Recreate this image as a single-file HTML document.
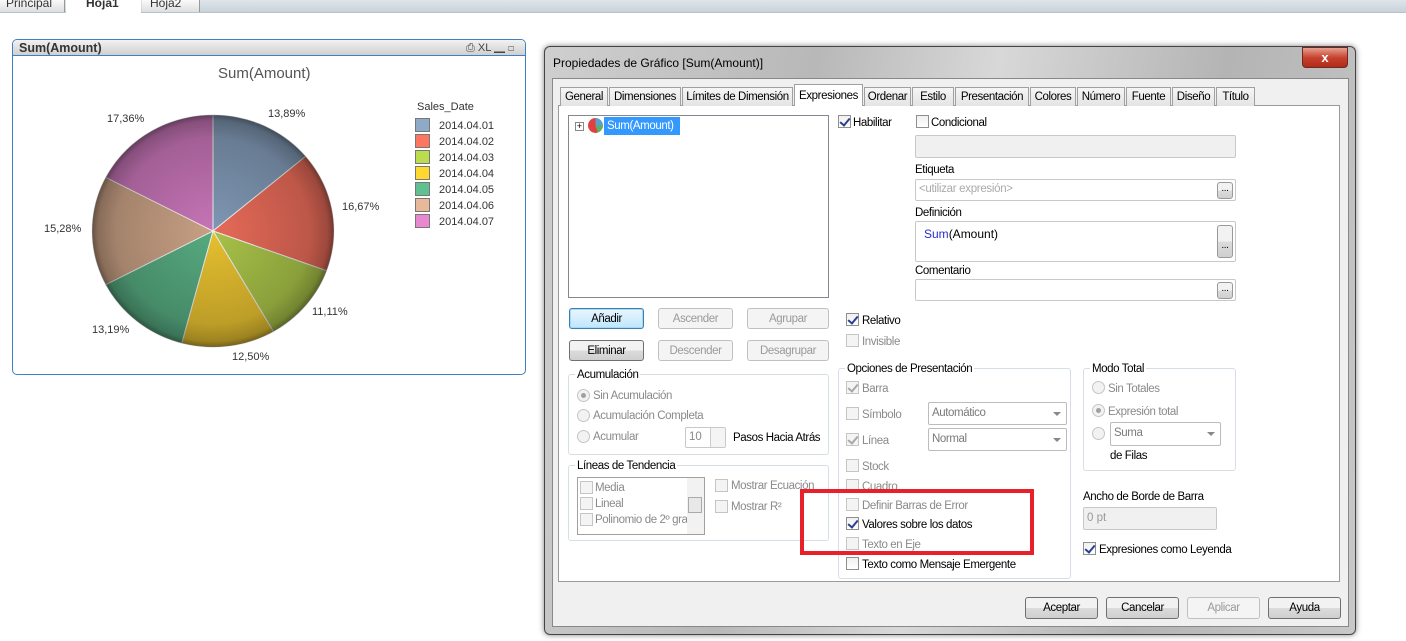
<!DOCTYPE html>
<html><head><meta charset="utf-8"><style>
*{margin:0;padding:0;box-sizing:border-box}
body{width:1406px;height:641px;background:#fff;font-family:"Liberation Sans",sans-serif;font-size:12px;color:#000;position:relative;overflow:hidden}
.a{position:absolute;white-space:nowrap}
.t{font-size:11.5px;letter-spacing:-0.4px;margin-top:2px}
.g{color:#8a8a8a}
.cb{position:absolute;width:13px;height:13px;border:1px solid #8f8f8f;background:linear-gradient(#f0f0f0,#fff)}
.cb.d{border-color:#c5c5c5;background:#f4f4f4}
.ck::after{content:"";position:absolute;left:3px;top:0px;width:4px;height:8px;border:solid #2a3f8f;border-width:0 2px 2px 0;transform:rotate(40deg)}
.cb.d.ck::after{border-color:#a8a8a8}
.rd{position:absolute;width:13px;height:13px;border-radius:50%;border:1px solid #c5c5c5;background:#f2f2f2}
.rd.on::after{content:"";position:absolute;left:3px;top:3px;width:5px;height:5px;border-radius:50%;background:#a0a0a0}
.btn{position:absolute;border:1px solid #707070;border-radius:3px;background:linear-gradient(#f2f2f2 50%,#dcdcdc 50%,#cfcfcf);text-align:center;line-height:20px;font-size:11.5px;letter-spacing:-0.4px}
.btn.d{border-color:#c0c0c0;background:#f4f4f4;color:#9a9a9a}
.in{position:absolute;border:1px solid #c8c8c8;border-radius:2px;background:#fff}
.gb{position:absolute;border:1px solid #d5dfe5;border-radius:3px}
.gl{position:absolute;background:#fff;padding:0 2px;font-size:11.5px;letter-spacing:-0.4px;top:-6px;left:6px}
.dd{position:absolute;border:1px solid #bcbcbc;border-radius:2px;background:#fff;color:#7a7a7a;padding-left:3px;line-height:20px;font-size:11.5px;letter-spacing:-0.4px}
.dd::after{content:"";position:absolute;right:5px;top:9px;border:4px solid transparent;border-top:4px solid #888}
.tab{position:absolute;top:87px;height:19px;border:1px solid #a0a0a0;border-bottom:none;background:linear-gradient(#f6f6f6,#e4e4e4);line-height:19px;text-align:center;font-size:11.5px;letter-spacing:-0.4px}
</style></head><body>
<div class="a" style="left:0;top:0;width:1406px;height:13px;background:linear-gradient(#dfe5ea,#c9d2da);border-bottom:1px solid #b8c2cc"></div>
<div class="a" style="left:0;top:0;width:65px;height:12px;background:linear-gradient(#fafafa,#dedede);border-right:1px solid #999;font-size:12px;line-height:6px;padding-left:6px;color:#333">Principal</div>
<div class="a" style="left:66px;top:0;width:75px;height:14px;background:#fff;font-weight:bold;font-size:12px;line-height:6px;padding-left:20px;color:#333">Hoja1</div>
<div class="a" style="left:142px;top:0;width:58px;height:12px;background:linear-gradient(#fafafa,#dedede);border-right:1px solid #999;font-size:12px;line-height:6px;padding-left:8px;color:#333">Hoja2</div>

<div class="a" style="left:12px;top:39px;width:514px;height:336px;border:1px solid #3f7fc2;border-radius:5px;background:#fff"></div>
<div class="a" style="left:13px;top:40px;width:512px;height:16px;background:linear-gradient(#f2f2f2,#cfcfcf);border-radius:4px 4px 0 0;border-bottom:1px solid #3f7fc2;font-weight:bold;font-size:12.5px;padding-left:6px;line-height:16px;color:#333">Sum(Amount)</div>
<div class="a" style="left:466px;top:40px;font-size:11px;color:#444;line-height:16px">⎙ XL ▁ ◻</div>
<div class="a" style="left:218px;top:65px;font-size:15px;color:#555">Sum(Amount)</div>
<svg class="a" style="left:0;top:0" width="540" height="380">
<defs><radialGradient id="sh" cx="213" cy="231" r="121" gradientUnits="userSpaceOnUse"><stop offset="0" stop-color="#000" stop-opacity="0"/><stop offset="0.8" stop-color="#000" stop-opacity="0.18"/><stop offset="0.95" stop-color="#000" stop-opacity="0.32"/><stop offset="1" stop-color="#000" stop-opacity="0.5"/></radialGradient></defs>
<g transform="translate(213,231) scale(1,0.96) translate(-213,-231)" stroke="#eee" stroke-width="1">
<path d="M213,231 L213,110 A121,121 0 0 1 305.7,153.2 Z" fill="#7f97b3"/>
<path d="M213,231 L305.7,153.2 A121,121 0 0 1 326.7,272.4 Z" fill="#e66a58"/>
<path d="M213,231 L326.7,272.4 A121,121 0 0 1 273.5,335.8 Z" fill="#a8c248"/>
<path d="M213,231 L273.5,335.8 A121,121 0 0 1 181.7,347.9 Z" fill="#e6c030"/>
<path d="M213,231 L181.7,347.9 A121,121 0 0 1 105.7,286.9 Z" fill="#56aa80"/>
<path d="M213,231 L105.7,286.9 A121,121 0 0 1 105.7,175.1 Z" fill="#c8a084"/>
<path d="M213,231 L105.7,175.1 A121,121 0 0 1 213,110 Z" fill="#c674b6"/>
<ellipse cx="213" cy="231" rx="121" ry="121" fill="url(#sh)" stroke="none"/>
</g>
</svg>
<div class="a" style="left:268px;top:108px;font-size:11px;color:#333">13,89%</div>
<div class="a" style="left:342px;top:201px;font-size:11px;color:#333">16,67%</div>
<div class="a" style="left:312px;top:306px;font-size:11px;color:#333">11,11%</div>
<div class="a" style="left:232px;top:351px;font-size:11px;color:#333">12,50%</div>
<div class="a" style="left:92px;top:324px;font-size:11px;color:#333">13,19%</div>
<div class="a" style="left:44px;top:223px;font-size:11px;color:#333">15,28%</div>
<div class="a" style="left:107px;top:113px;font-size:11px;color:#333">17,36%</div>
<div class="a" style="left:417px;top:101px;font-size:11px;color:#333">Sales_Date</div>
<div class="a" style="left:415px;top:118px;font-size:11px;color:#333;line-height:15px">
<div><span style="display:inline-block;width:15px;height:14px;background:#8fa9c8;border:1px solid #777;vertical-align:-3px;margin-right:9px"></span>2014.04.01</div>
<div><span style="display:inline-block;width:15px;height:14px;background:#ff7660;border:1px solid #777;vertical-align:-3px;margin-right:9px"></span>2014.04.02</div>
<div><span style="display:inline-block;width:15px;height:14px;background:#bcdc50;border:1px solid #777;vertical-align:-3px;margin-right:9px"></span>2014.04.03</div>
<div><span style="display:inline-block;width:15px;height:14px;background:#ffd830;border:1px solid #777;vertical-align:-3px;margin-right:9px"></span>2014.04.04</div>
<div><span style="display:inline-block;width:15px;height:14px;background:#60c090;border:1px solid #777;vertical-align:-3px;margin-right:9px"></span>2014.04.05</div>
<div><span style="display:inline-block;width:15px;height:14px;background:#e8b898;border:1px solid #777;vertical-align:-3px;margin-right:9px"></span>2014.04.06</div>
<div><span style="display:inline-block;width:15px;height:14px;background:#e888d0;border:1px solid #777;vertical-align:-3px;margin-right:9px"></span>2014.04.07</div>
</div>

<div class="a" style="left:544px;top:46px;width:812px;height:589px;border:1px solid #444;border-radius:6px;background:linear-gradient(100deg,#cfcfcf,#b8b8b8 30%,#d8d8d8 50%,#b4b4b4 75%,#c8c8c8);box-shadow:0 0 6px rgba(0,0,0,.5)"></div>
<div class="a" style="left:553px;top:55px;font-size:12px;line-height:16px">Propiedades de Gráfico [Sum(Amount)]</div>
<div class="a" style="left:1302px;top:47px;width:46px;height:21px;border:1px solid #6b2a22;border-radius:0 0 4px 4px;background:linear-gradient(#e8a090,#c8432f 50%,#b02c18);color:#fff;font-weight:bold;text-align:center;line-height:19px;font-size:13px">x</div>
<div class="a" style="left:552px;top:78px;width:797px;height:549px;border:1px solid #888;background:#f0f0f0"></div>
<div class="a" style="left:558px;top:105px;width:782px;height:477px;border:1px solid #9a9a9a;background:#fff"></div>
<div class="tab" style="left:560px;width:48px">General</div>
<div class="tab" style="left:609px;width:72px">Dimensiones</div>
<div class="tab" style="left:682px;width:111px">Límites de Dimensión</div>
<div class="tab" style="left:794px;top:84px;height:22px;width:69px;background:#fff;line-height:22px">Expresiones</div>
<div class="tab" style="left:864px;width:47px">Ordenar</div>
<div class="tab" style="left:912px;width:42px">Estilo</div>
<div class="tab" style="left:955px;width:74px">Presentación</div>
<div class="tab" style="left:1030px;width:46px">Colores</div>
<div class="tab" style="left:1077px;width:48px">Número</div>
<div class="tab" style="left:1126px;width:45px">Fuente</div>
<div class="tab" style="left:1172px;width:43px">Diseño</div>
<div class="tab" style="left:1216px;width:39px">Título</div>

<div class="a" style="left:568px;top:115px;width:261px;height:183px;border:1px solid #828790;background:#fff"></div>
<div class="a" style="left:575px;top:122px;width:9px;height:9px;border:1px solid #888;font-size:9px;line-height:7px;text-align:center">+</div>
<div class="a" style="left:588px;top:118px;width:15px;height:15px;border-radius:50%;background:conic-gradient(#5aa0d0 0 25%,#60b060 25% 45%,#e04040 45%)"></div>
<div class="a" style="left:604px;top:117px;width:76px;height:18px;background:#3399ff;color:#fff;line-height:18px;padding-left:3px;font-size:11.5px;letter-spacing:-0.4px">Sum(Amount)</div>

<div class="btn" style="left:569px;top:308px;width:75px;height:21px;border-color:#3c7fb1;background:linear-gradient(#eaf6fd,#bee6fd);box-shadow:inset 0 0 0 1px #a8d8f8">Añadir</div>
<div class="btn d" style="left:658px;top:308px;width:75px;height:21px">Ascender</div>
<div class="btn d" style="left:747px;top:308px;width:82px;height:21px">Agrupar</div>
<div class="btn" style="left:569px;top:340px;width:75px;height:21px">Eliminar</div>
<div class="btn d" style="left:658px;top:340px;width:75px;height:21px">Descender</div>
<div class="btn d" style="left:747px;top:340px;width:82px;height:21px">Desagrupar</div>

<div class="gb" style="left:568px;top:374px;width:261px;height:81px"><span class="gl">Acumulación</span></div>
<div class="rd on" style="left:577px;top:389px"></div><div class="a t g" style="left:593px;top:388px">Sin Acumulación</div>
<div class="rd" style="left:577px;top:409px"></div><div class="a t g" style="left:593px;top:408px">Acumulación Completa</div>
<div class="rd" style="left:577px;top:430px"></div><div class="a t g" style="left:593px;top:429px">Acumular</div>
<div class="in" style="left:685px;top:427px;width:41px;height:21px;color:#888;padding-left:3px;line-height:19px;font-size:11.5px">10</div>
<div class="a" style="left:710px;top:428px;width:15px;height:19px;border-left:1px solid #ccc;background:#f4f4f4"></div>
<div class="a t" style="left:733px;top:430px">Pasos Hacia Atrás</div>

<div class="gb" style="left:568px;top:465px;width:261px;height:76px"><span class="gl">Líneas de Tendencia</span></div>
<div class="a" style="left:577px;top:477px;width:128px;height:58px;border:1px solid #a0a0a0;background:#fff;overflow:hidden"></div>
<div class="cb d" style="left:580px;top:481px"></div><div class="a t g" style="left:595px;top:480px">Media</div>
<div class="cb d" style="left:580px;top:497px"></div><div class="a t g" style="left:595px;top:496px">Lineal</div>
<div class="cb d" style="left:580px;top:513px"></div><div class="a t g" style="left:595px;top:512px">Polinomio de 2º gra</div>
<div class="a" style="left:687px;top:478px;width:17px;height:56px;background:#f2f2f2"></div>
<div class="a" style="left:688px;top:497px;width:14px;height:16px;border:1px solid #aaa;background:#e8e8e8"></div>
<div class="cb d" style="left:715px;top:479px"></div><div class="a t g" style="left:731px;top:478px">Mostrar Ecuación</div>
<div class="cb d" style="left:715px;top:500px"></div><div class="a t g" style="left:731px;top:499px">Mostrar R²</div>

<div class="cb ck" style="left:838px;top:115px"></div><div class="a t" style="left:853px;top:115px">Habilitar</div>
<div class="cb" style="left:916px;top:115px"></div><div class="a t" style="left:931px;top:115px">Condicional</div>
<div class="in" style="left:915px;top:135px;width:321px;height:23px;background:#f0f0f0"></div>
<div class="a t" style="left:915px;top:162px">Etiqueta</div>
<div class="in" style="left:915px;top:179px;width:321px;height:22px;color:#aaa;padding-left:3px;line-height:19px;font-size:11.5px;letter-spacing:-0.3px">&lt;utilizar expresión&gt;</div>
<div class="btn" style="left:1217px;top:182px;width:16px;height:17px;line-height:12px;font-size:10px;border-color:#999">...</div>
<div class="a t" style="left:915px;top:205px">Definición</div>
<div class="in" style="left:915px;top:221px;width:321px;height:41px;padding:5px 0 0 8px;font-size:12px"><span style="color:#2a2ad0">Sum</span>(Amount)</div>
<div class="btn" style="left:1217px;top:225px;width:16px;height:33px;line-height:40px;font-size:10px;border-color:#999">...</div>
<div class="a t" style="left:915px;top:263px">Comentario</div>
<div class="in" style="left:915px;top:279px;width:321px;height:22px"></div>
<div class="btn" style="left:1217px;top:282px;width:16px;height:17px;line-height:12px;font-size:10px;border-color:#999">...</div>

<div class="cb ck" style="left:846px;top:313px"></div><div class="a t" style="left:862px;top:313px">Relativo</div>
<div class="cb d" style="left:846px;top:334px"></div><div class="a t g" style="left:862px;top:334px">Invisible</div>

<div class="gb" style="left:838px;top:368px;width:233px;height:211px"><span class="gl">Opciones de Presentación</span></div>
<div class="cb d ck" style="left:846px;top:381px"></div><div class="a t g" style="left:862px;top:381px">Barra</div>
<div class="cb d" style="left:846px;top:407px"></div><div class="a t g" style="left:862px;top:407px">Símbolo</div>
<div class="dd" style="left:928px;top:402px;width:139px;height:23px">Automático</div>
<div class="cb d ck" style="left:846px;top:433px"></div><div class="a t g" style="left:862px;top:433px">Línea</div>
<div class="dd" style="left:928px;top:428px;width:139px;height:23px">Normal</div>
<div class="cb d" style="left:846px;top:459px"></div><div class="a t g" style="left:862px;top:459px">Stock</div>
<div class="cb d" style="left:846px;top:479px"></div><div class="a t g" style="left:862px;top:479px">Cuadro</div>
<div class="cb d" style="left:846px;top:498px"></div><div class="a t g" style="left:862px;top:498px">Definir Barras de Error</div>
<div class="cb ck" style="left:846px;top:517px"></div><div class="a t" style="left:862px;top:517px">Valores sobre los datos</div>
<div class="cb d" style="left:846px;top:537px"></div><div class="a t g" style="left:862px;top:537px">Texto en Eje</div>
<div class="cb" style="left:846px;top:557px"></div><div class="a t" style="left:862px;top:557px">Texto como Mensaje Emergente</div>

<div class="gb" style="left:1083px;top:368px;width:153px;height:103px"><span class="gl">Modo Total</span></div>
<div class="rd" style="left:1092px;top:381px"></div><div class="a t g" style="left:1108px;top:381px">Sin Totales</div>
<div class="rd on" style="left:1092px;top:404px"></div><div class="a t g" style="left:1108px;top:404px">Expresión total</div>
<div class="rd" style="left:1092px;top:427px"></div>
<div class="dd" style="left:1110px;top:422px;width:111px;height:24px">Suma</div>
<div class="a t" style="left:1110px;top:448px">de Filas</div>

<div class="a t" style="left:1083px;top:489px">Ancho de Borde de Barra</div>
<div class="in" style="left:1083px;top:507px;width:134px;height:23px;background:#f0f0f0;color:#999;padding-left:3px;line-height:20px;font-size:11.5px">0 pt</div>
<div class="cb ck" style="left:1083px;top:542px"></div><div class="a t" style="left:1099px;top:542px">Expresiones como Leyenda</div>

<div class="a" style="left:800px;top:489px;width:234px;height:66px;border:4px solid #e8202a"></div>

<div class="btn" style="left:1025px;top:597px;width:73px;height:22px">Aceptar</div>
<div class="btn" style="left:1106px;top:597px;width:73px;height:22px">Cancelar</div>
<div class="btn d" style="left:1187px;top:597px;width:73px;height:22px">Aplicar</div>
<div class="btn" style="left:1268px;top:597px;width:73px;height:22px">Ayuda</div>
</body></html>
